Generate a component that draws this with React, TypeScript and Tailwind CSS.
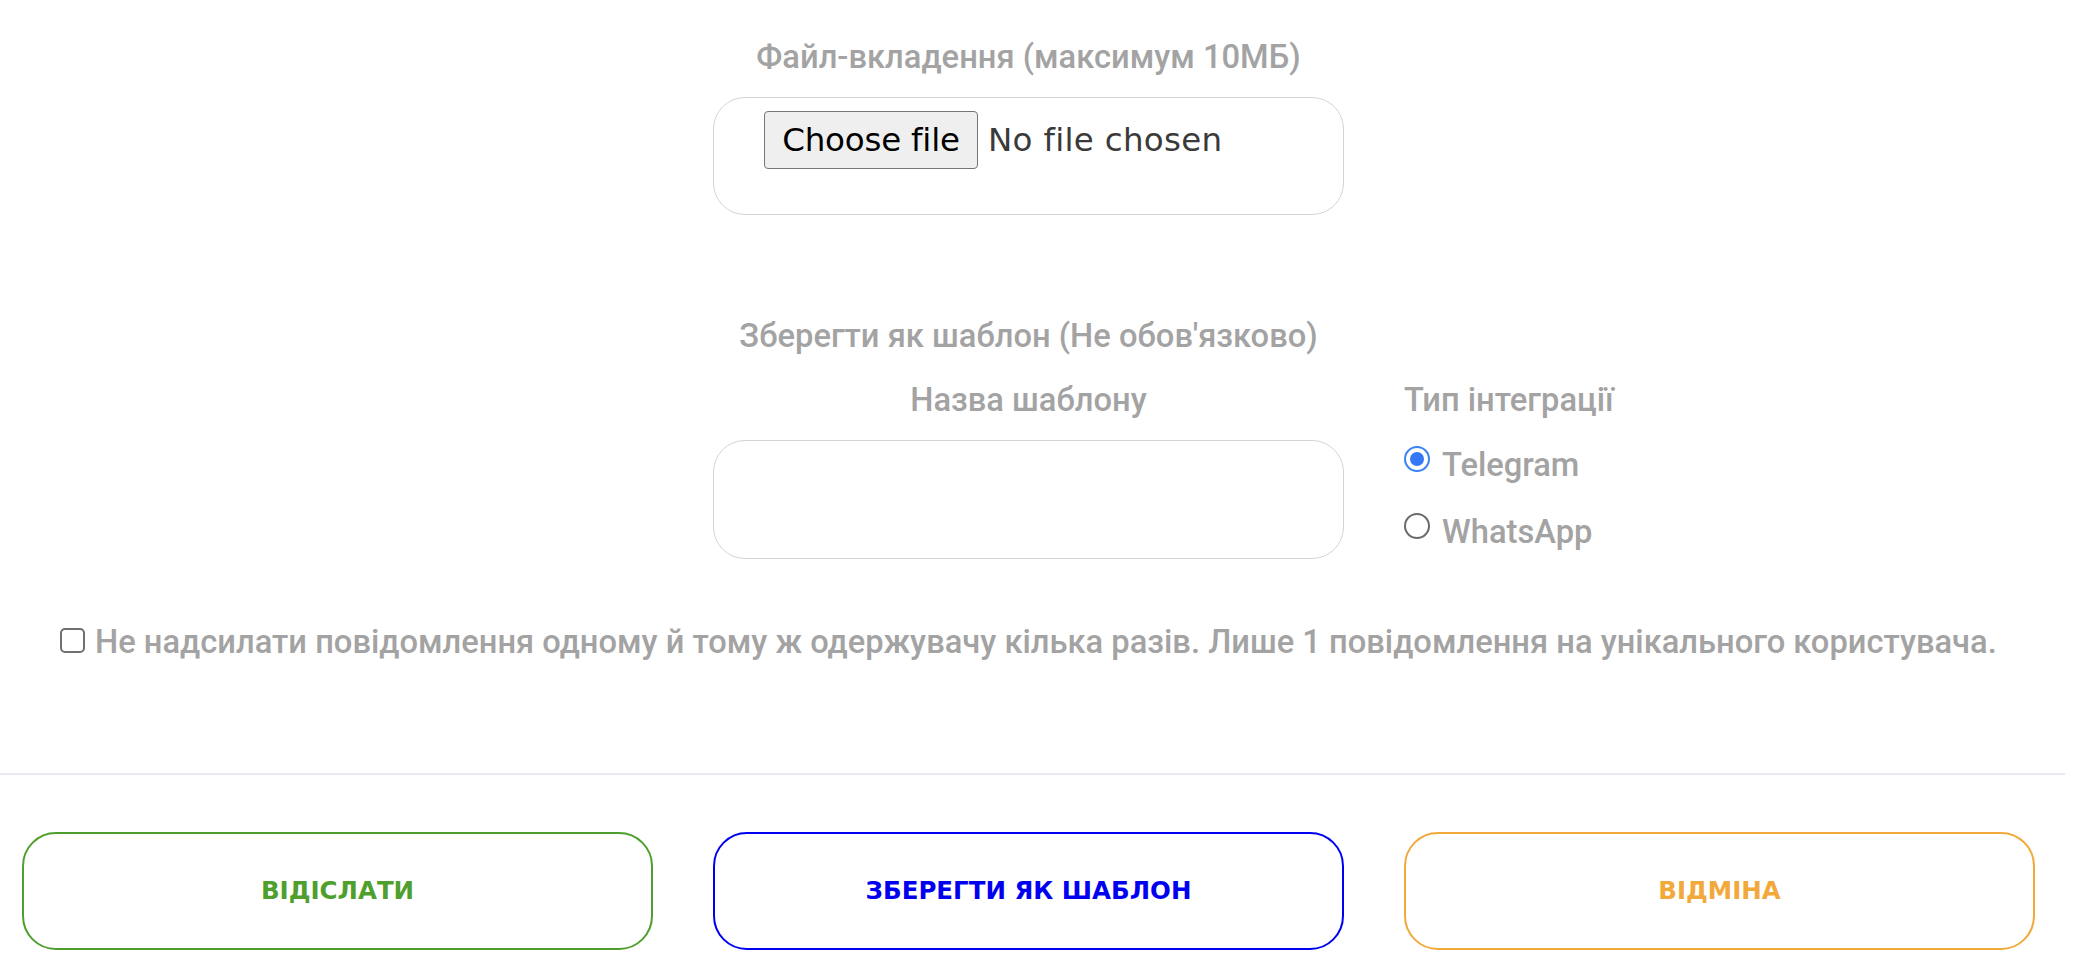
import React from "react";

function Radio({ checked }: { checked: boolean }) {
  return checked ? (
    <span className="flex h-[26px] w-[26px] shrink-0 items-center justify-center rounded-full border-[2.5px] border-[#3b82f6] bg-white">
      <span className="block h-[14px] w-[14px] rounded-full bg-[#3478f6]" />
    </span>
  ) : (
    <span className="block h-[26px] w-[26px] shrink-0 rounded-full border-[2px] border-[#6b6b6b] bg-white" />
  );
}

export default function App() {
  return (
    <div className="min-h-[964px] w-full bg-white font-['Roboto','Liberation_Sans',sans-serif]">
      <div className="flex w-[2065px] flex-col">
        <div className="grid grid-cols-[631px_631px_631px] gap-x-[60px] pl-[22px] pt-[37px]">
          <div />
          <div className="flex flex-col">
            <div className="h-[40px] text-center text-[32.7px] font-medium leading-[40px] text-[#a3a3a3]">
              Файл-вкладення (максимум 10МБ)
            </div>
            <div className="mt-[20px] flex h-[118px] items-start rounded-[32px] border-[1.5px] border-[#d4d4d4] pl-[50px] pt-[13px]">
              <span className="flex h-[58px] w-[214px] shrink-0 items-center justify-center rounded-[4px] border border-[#767676] bg-[#efefef] font-['DejaVu_Sans',sans-serif] text-[32.5px] tracking-[-0.2px] text-black">
                Choose file
              </span>
              <span className="ml-[10px] flex h-[58px] items-center font-['DejaVu_Sans',sans-serif] text-[32.5px] tracking-[0.3px] text-[#3a3a3a]">
                No file chosen
              </span>
            </div>
            <div className="mt-[101px] h-[40px] text-center text-[32.7px] font-medium leading-[40px] text-[#a3a3a3]">
              Зберегти як шаблон (Не обов'язково)
            </div>
          </div>
          <div />
        </div>

        <div className="mt-[24px] grid grid-cols-[631px_631px_631px] gap-x-[60px] pl-[22px]">
          <div />
          <div className="flex flex-col">
            <div className="h-[40px] text-center text-[32.7px] font-medium leading-[40px] text-[#a3a3a3]">
              Назва шаблону
            </div>
            <div className="mt-[20px] h-[119px] rounded-[32px] border-[1.5px] border-[#d4d4d4]" />
          </div>
          <div className="flex flex-col">
            <div className="h-[40px] text-[32.7px] font-medium leading-[40px] text-[#a3a3a3]">
              Тип інтеграції
            </div>
            <div className="mt-[25px] flex h-[40px] items-center gap-[12px]">
              <span className="-mt-[12px] block">
                <Radio checked />
              </span>
              <span className="text-[32.7px] font-medium leading-[40px] text-[#a3a3a3]">Telegram</span>
            </div>
            <div className="mt-[27px] flex h-[40px] items-center gap-[12px]">
              <span className="-mt-[12px] block">
                <Radio checked={false} />
              </span>
              <span className="text-[32.7px] font-medium leading-[40px] text-[#a3a3a3]">WhatsApp</span>
            </div>
          </div>
        </div>

        <div className="mt-[63px] flex h-[40px] items-center pl-[60px]">
          <span className="-mt-[4px] block h-[25px] w-[25px] shrink-0 rounded-[5px] border-[2px] border-[#707070] bg-white" />
          <span className="ml-[10px] text-[32.7px] font-medium leading-[40px] text-[#a3a3a3]">
            Не надсилати повідомлення одному й тому ж одержувачу кілька разів. Лише 1 повідомлення на унікального користувача.
          </span>
        </div>

        <div className="mt-[111px] h-[2px] w-full bg-[#e9e9ef]" />

        <div className="mt-[57px] grid grid-cols-[631px_631px_631px] gap-x-[60px] pl-[22px]">
          <div className="flex h-[118px] items-center justify-center rounded-[34px] border-[2px] border-[#4e9f2d] font-['DejaVu_Sans',sans-serif] text-[24.5px] font-bold text-[#4e9f2d]">
            ВІДІСЛАТИ
          </div>
          <div className="flex h-[118px] items-center justify-center rounded-[34px] border-[2px] border-[#0000f0] font-['DejaVu_Sans',sans-serif] text-[24.5px] font-bold text-[#0000f0]">
            ЗБЕРЕГТИ ЯК ШАБЛОН
          </div>
          <div className="flex h-[118px] items-center justify-center rounded-[34px] border-[2px] border-[#f2a93b] font-['DejaVu_Sans',sans-serif] text-[24.5px] font-bold text-[#f2a93b]">
            ВІДМІНА
          </div>
        </div>
      </div>
    </div>
  );
}
